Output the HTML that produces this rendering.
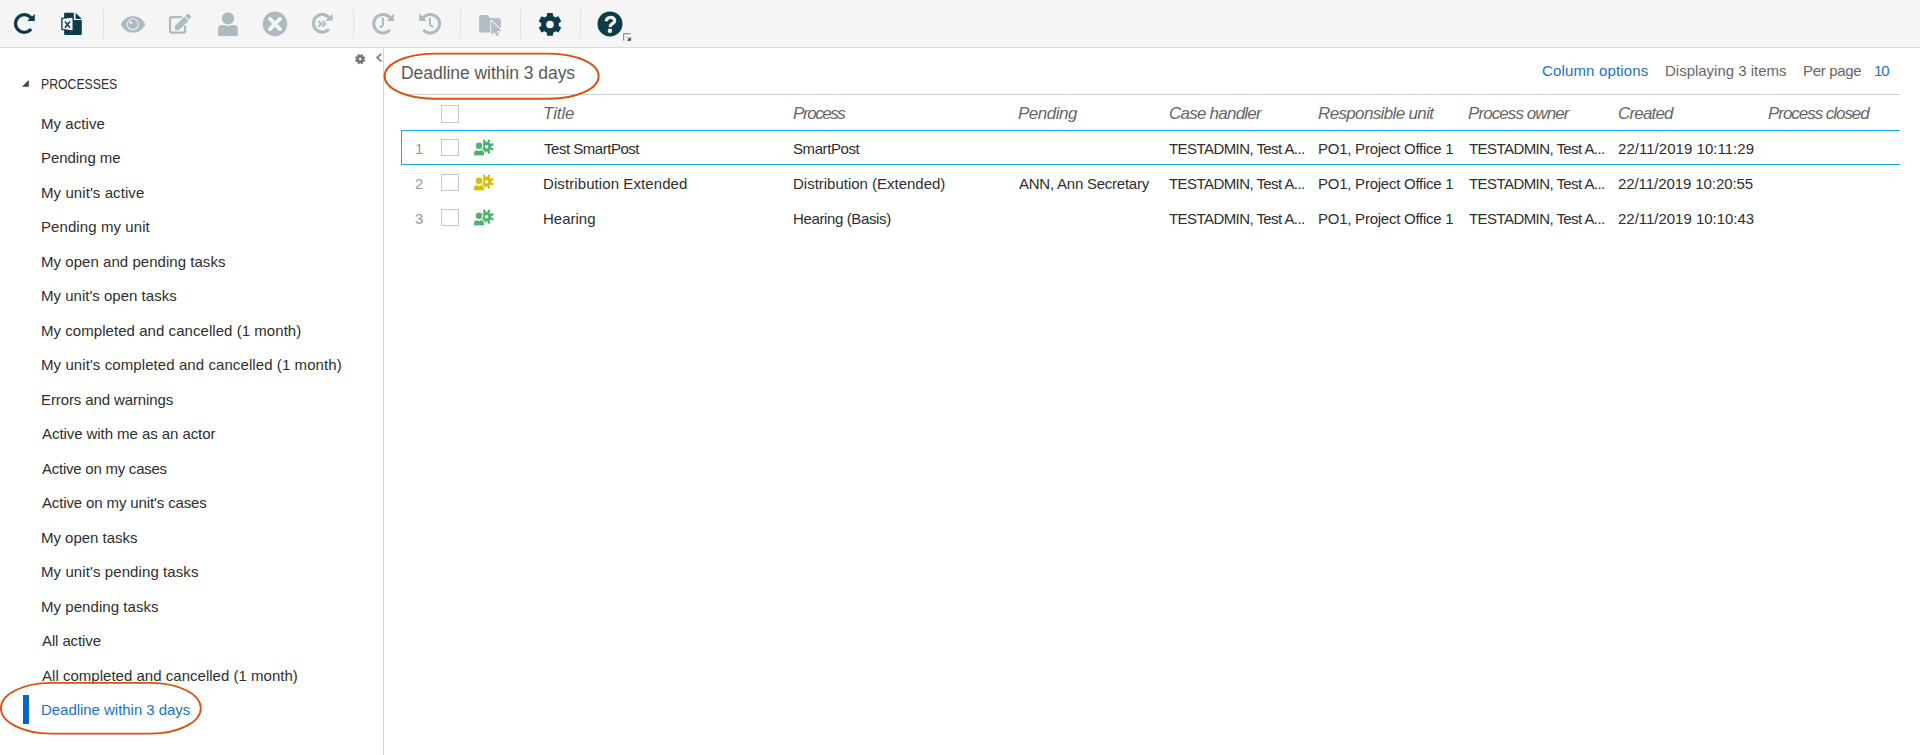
<!DOCTYPE html>
<html><head><meta charset="utf-8"><style>
*{margin:0;padding:0;box-sizing:border-box}
html,body{width:1920px;height:755px;overflow:hidden;background:#fff}
body{position:relative;font-family:"Liberation Sans",sans-serif}
.tb{position:absolute;left:0;top:0;width:1920px;height:47px;background:#f5f5f5}
.tbl{position:absolute;left:0;top:47px;width:1920px;height:1px;background:#dcdcdc}
.sep{position:absolute;top:9px;width:1px;height:29px;background:#e2e2e2}
.ic{position:absolute;overflow:visible}
.sbl{position:absolute;left:383px;top:48px;width:1px;height:707px;background:#d4d4d4}
.t{position:absolute;white-space:nowrap;line-height:normal}
.proc{font-size:15px;color:#2e2e2e;transform:scaleX(0.817);transform-origin:0 0}
.si{font-size:15px;color:#2e2e2e}
.act{color:#1a73c8}
.h1{font-size:17.5px;color:#595959}
.info{font-size:15px;color:#666}
.blue{color:#1a73c8}
.hd{font-size:17px;font-style:italic;color:#666}
.num{font-size:15px;color:#999}
.cell{font-size:15px;color:#2e2e2e}
.cb{position:absolute;width:18px;height:17px;border:1px solid #c8c8c8;background:#fff}
.hline{position:absolute;left:401px;top:94px;width:1499px;height:1px;background:#d0d0d0}
.sel{position:absolute;left:401px;top:130px;width:1499px;height:35px;border:1px solid #12a9e6;border-right:none}
.bar{position:absolute;left:23px;top:695px;width:6px;height:29px;background:#0066cc}
</style></head><body>
<div class="tb"></div><div class="tbl"></div>
<div class="sep" style="left:103px"></div><div class="sep" style="left:353px"></div><div class="sep" style="left:460px"></div><div class="sep" style="left:520px"></div><div class="sep" style="left:580px"></div>
<svg class="ic" style="left:10px;top:8px" width="30" height="30" viewBox="0 0 30 30"><path d="M20.22,22.08A8.85,8.85 0 1 1 20.88,9.58" fill="none" stroke="#0e3a4a" stroke-width="3.3" stroke-linecap="round"/><path d="M24.8,6V13.1H17.1Z" fill="#0e3a4a"/></svg><svg class="ic" style="left:56px;top:8px" width="30" height="30" viewBox="0 0 30 30"><path d="M8.1,5.8Q8.1,4.8 9.1,4.8H17.8V12H25.8V26Q25.8,27 24.8,27H9.1Q8.1,27 8.1,26Z" fill="#0e3a4a"/><path d="M19.6,4.8L25.8,10.9H19.6Z" fill="#0e3a4a"/><path d="M5.85,10.45L17.2,8.9V23.2L5.85,21.35Z" fill="#f5f5f5" stroke="#0e3a4a" stroke-width="1.3" stroke-linejoin="round"/><path d="M8.9,13.5L14,19.8M14,13.5L8.9,19.8" stroke="#0e3a4a" stroke-width="1.45"/></svg><svg class="ic" style="left:115px;top:8px" width="35" height="32" viewBox="0 0 35 32"><path d="M5.7,16.4C9,10.5 13,8.3 18,8.3C23,8.3 27,10.5 30.3,16.4C27,22.3 23,24.6 18,24.6C13,24.6 9,22.3 5.7,16.4Z" fill="#adbac0"/><circle cx="17.8" cy="16.3" r="6.0" fill="#f5f5f5"/><circle cx="17.8" cy="16.3" r="5.05" fill="#adbac0"/><circle cx="15.9" cy="14.5" r="1.35" fill="#f5f5f5"/></svg><svg class="ic" style="left:164px;top:8px" width="32" height="32" viewBox="0 0 32 32"><path d="M17.8,9.15H7.6Q6.05,9.15 6.05,10.7V23.1Q6.05,24.65 7.6,24.65H19.5Q21.05,24.65 21.05,23.1V17.8" fill="none" stroke="#adbac0" stroke-width="2.3"/><path d="M11.2,21.8V18L20.4,8.8L24.2,12.6L15,21.8Z" fill="#adbac0" stroke="#adbac0" stroke-width="0.6" stroke-linejoin="round"/><path d="M21.5,8.2L23.6,6.1Q24.2,5.5 24.8,6.1L27,8.3Q27.6,8.9 27,9.5L24.9,11.6Z" fill="#adbac0"/></svg><svg class="ic" style="left:212px;top:8px" width="32" height="32" viewBox="0 0 32 32"><circle cx="16" cy="10.4" r="6.1" fill="#adbac0"/><path d="M6.1,27V20.5Q6.1,17 9.8,17Q13,17 16,18.3Q19,17 22.1,17Q25.8,17 25.8,20.5V27Q25.8,28 24.8,28H7.1Q6.1,28 6.1,27Z" fill="#adbac0"/></svg><svg class="ic" style="left:258px;top:8px" width="34" height="32" viewBox="0 0 34 32"><circle cx="16.95" cy="15.9" r="12.3" fill="#adbac0"/><path d="M11.9,10.95L22,21.05M22,10.95L11.9,21.05" stroke="#f5f5f5" stroke-width="3.9" stroke-linecap="round"/></svg><svg class="ic" style="left:306px;top:8px" width="32" height="32" viewBox="0 0 32 32"><path d="M21.99,22.03A8.85,8.85 0 1 1 22.88,9.33" fill="none" stroke="#adbac0" stroke-width="3.1" stroke-linecap="round"/><path d="M26.7,6.1V12.7H19.3Z" fill="#adbac0"/><path d="M12.4,13.3L15.3,15.9L12.4,18.5M16.4,13.3L19.3,15.9L16.4,18.5" fill="none" stroke="#adbac0" stroke-width="1.9"/></svg><svg class="ic" style="left:366px;top:8px" width="32" height="32" viewBox="0 0 32 32"><path d="M22.98,22.82A9.3,9.3 0 1 1 23.91,9.48" fill="none" stroke="#adbac0" stroke-width="3.0" stroke-linecap="round"/><path d="M27.75,5.5V12.9H20.8Z" fill="#adbac0"/><path d="M16.95,10.6V16.9L14.4,19.2" fill="none" stroke="#adbac0" stroke-width="2" stroke-linecap="round" stroke-linejoin="round"/></svg><svg class="ic" style="left:414px;top:8px" width="32" height="32" viewBox="0 0 32 32"><path d="M10.32,22.82A9.3,9.3 0 1 0 9.39,9.48" fill="none" stroke="#adbac0" stroke-width="3.0" stroke-linecap="round"/><path d="M5.1,5.3V12.9H12.5Z" fill="#adbac0"/><path d="M15.9,10.8V17L18.4,18.6" fill="none" stroke="#adbac0" stroke-width="2" stroke-linecap="round" stroke-linejoin="round"/></svg><svg class="ic" style="left:474px;top:8px" width="32" height="32" viewBox="0 0 32 32"><path d="M5.1,8.5Q5.1,7 6.6,7H13.9L16.1,10.2H25.4Q26.9,10.2 26.9,11.7V23.1Q26.9,24.6 25.4,24.6H6.6Q5.1,24.6 5.1,23.1Z" fill="#b4bcc6"/><path d="M17.2,12.7V26.7L20.55,24.15L23.1,28.4L25,27.1L22.9,23.5L27.1,22.25Z" fill="#f5f5f5" stroke="#f5f5f5" stroke-width="2" stroke-linejoin="round"/><path d="M17.2,12.7V26.7L20.55,24.15L23.1,28.4L25,27.1L22.9,23.5L27.1,22.25Z" fill="#b4bcc6"/></svg><svg class="ic" style="left:534px;top:8px" width="32" height="32" viewBox="0 0 32 32"><path d="M12.78,8.26L13.23,5.08L18.77,5.08L19.22,8.26A8.8,8.8 0 0 1 21.48,9.56L21.48,9.56L24.46,8.36L27.23,13.17L24.70,15.15A8.8,8.8 0 0 1 24.70,17.75L24.70,17.75L27.23,19.73L24.46,24.54L21.48,23.34A8.8,8.8 0 0 1 19.22,24.64L19.22,24.64L18.77,27.82L13.23,27.82L12.78,24.64A8.8,8.8 0 0 1 10.52,23.34L10.52,23.34L7.54,24.54L4.77,19.73L7.30,17.75A8.8,8.8 0 0 1 7.30,15.15L7.30,15.15L4.77,13.17L7.54,8.36L10.52,9.56A8.8,8.8 0 0 1 12.78,8.26ZM19.80,16.45A3.8,3.8 0 1 0 12.20,16.45A3.8,3.8 0 1 0 19.80,16.45Z" fill="#0e3a4a" fill-rule="evenodd"/></svg><svg class="ic" style="left:592px;top:6px" width="44" height="38" viewBox="0 0 44 38"><circle cx="18" cy="17.9" r="12.5" fill="#0e3a4a"/><path d="M14.3,15.3C14.3,12.8 16.1,11.3 18.4,11.3C20.9,11.3 22.7,12.8 22.7,14.9C22.7,17.5 18.3,17.7 18.3,20.2V21.1" fill="none" stroke="#f5f5f5" stroke-width="3.3"/><circle cx="17.9" cy="24.7" r="2.25" fill="#f5f5f5"/><path d="M31.7,34.5V27.7H38.6" fill="none" stroke="#777" stroke-width="1"/><path d="M35.2,31L37.8,33.6M38.6,31.6V34.4H35.8Z" stroke="#555" stroke-width="1" fill="#555"/></svg>
<div class="sbl"></div>
<svg class="ic" style="left:350px;top:50px" width="36" height="18" viewBox="0 0 36 18"><path d="M7.61,6.18L7.33,4.76L9.16,4.00L9.97,5.21A3.9,3.9 0 0 1 10.43,5.21L10.43,5.21L11.24,4.00L13.07,4.76L12.79,6.18A3.9,3.9 0 0 1 13.12,6.51L13.12,6.51L14.54,6.23L15.30,8.06L14.09,8.87A3.9,3.9 0 0 1 14.09,9.33L14.09,9.33L15.30,10.14L14.54,11.97L13.12,11.69A3.9,3.9 0 0 1 12.79,12.02L12.79,12.02L13.07,13.44L11.24,14.20L10.43,12.99A3.9,3.9 0 0 1 9.97,12.99L9.97,12.99L9.16,14.20L7.33,13.44L7.61,12.02A3.9,3.9 0 0 1 7.28,11.69L7.28,11.69L5.86,11.97L5.10,10.14L6.31,9.33A3.9,3.9 0 0 1 6.31,8.87L6.31,8.87L5.10,8.06L5.86,6.23L7.28,6.51A3.9,3.9 0 0 1 7.61,6.18ZM11.45,9.10A1.25,1.25 0 1 0 8.95,9.10A1.25,1.25 0 1 0 11.45,9.10Z" fill="#777" fill-rule="evenodd"/><path d="M31.2,3.8L27.1,7.6L31.2,11.4" fill="none" stroke="#777" stroke-width="1.6"/></svg>
<svg class="ic" style="left:20px;top:78px" width="12" height="12" viewBox="0 0 12 12"><path d="M8.8,2L8.8,8.7L2,8.7Z" fill="#444"/></svg>
<div id="proc" class="t proc" style="left:41.00px;top:75.10px;letter-spacing:0.000px">PROCESSES</div><div id="si0" class="t si" style="left:41.00px;top:114.97px;letter-spacing:0.069px">My active</div><div id="si1" class="t si" style="left:41.00px;top:149.47px;letter-spacing:-0.048px">Pending me</div><div id="si2" class="t si" style="left:41.00px;top:183.97px;letter-spacing:0.082px">My unit&#39;s active</div><div id="si3" class="t si" style="left:41.00px;top:218.47px;letter-spacing:0.085px">Pending my unit</div><div id="si4" class="t si" style="left:41.00px;top:252.97px;letter-spacing:0.041px">My open and pending tasks</div><div id="si5" class="t si" style="left:41.00px;top:287.47px;letter-spacing:0.013px">My unit&#39;s open tasks</div><div id="si6" class="t si" style="left:41.00px;top:321.97px;letter-spacing:0.051px">My completed and cancelled (1 month)</div><div id="si7" class="t si" style="left:41.00px;top:356.47px;letter-spacing:0.083px">My unit&#39;s completed and cancelled (1 month)</div><div id="si8" class="t si" style="left:41.00px;top:390.97px;letter-spacing:-0.111px">Errors and warnings</div><div id="si9" class="t si" style="left:42.00px;top:425.47px;letter-spacing:-0.064px">Active with me as an actor</div><div id="si10" class="t si" style="left:42.00px;top:459.97px;letter-spacing:-0.243px">Active on my cases</div><div id="si11" class="t si" style="left:42.00px;top:494.47px;letter-spacing:-0.131px">Active on my unit&#39;s cases</div><div id="si12" class="t si" style="left:41.00px;top:528.97px;letter-spacing:-0.013px">My open tasks</div><div id="si13" class="t si" style="left:41.00px;top:563.47px;letter-spacing:0.091px">My unit&#39;s pending tasks</div><div id="si14" class="t si" style="left:41.00px;top:597.97px;letter-spacing:0.050px">My pending tasks</div><div id="si15" class="t si" style="left:42.00px;top:632.47px;letter-spacing:-0.111px">All active</div><div id="si16" class="t si" style="left:42.00px;top:666.97px;letter-spacing:0.020px">All completed and cancelled (1 month)</div><div id="siact" class="t si act" style="left:41.00px;top:700.60px;letter-spacing:-0.036px">Deadline within 3 days</div>
<div class="bar"></div>
<div class="hline"></div>
<div class="cb" style="left:441px;top:105px;height:18px"></div>
<div class="sel"></div>
<div id="h1" class="t h1" style="left:401.00px;top:62.75px;letter-spacing:-0.047px">Deadline within 3 days</div><div id="co" class="t info blue" style="left:1542.00px;top:62.00px;letter-spacing:0.154px">Column options</div><div id="disp" class="t info" style="left:1665.00px;top:62.00px;letter-spacing:-0.013px">Displaying 3 items</div><div id="pp" class="t info" style="left:1803.00px;top:62.00px;letter-spacing:-0.317px">Per page</div><div id="ten" class="t info blue" style="left:1874.00px;top:62.00px;letter-spacing:-1.200px">10</div><div id="hd0" class="t hd" style="left:543.00px;top:103.90px;letter-spacing:-0.100px">Title</div><div id="hd1" class="t hd" style="left:793.00px;top:103.90px;letter-spacing:-1.433px">Process</div><div id="hd2" class="t hd" style="left:1018.00px;top:103.90px;letter-spacing:-0.500px">Pending</div><div id="hd3" class="t hd" style="left:1169.00px;top:103.90px;letter-spacing:-0.763px">Case handler</div><div id="hd4" class="t hd" style="left:1318.00px;top:103.90px;letter-spacing:-0.647px">Responsible unit</div><div id="hd5" class="t hd" style="left:1468.00px;top:103.90px;letter-spacing:-0.921px">Process owner</div><div id="hd6" class="t hd" style="left:1618.00px;top:103.90px;letter-spacing:-0.833px">Created</div><div id="hd7" class="t hd" style="left:1768.00px;top:103.90px;letter-spacing:-1.042px">Process closed</div><div id="num0" class="t num" style="left:415.00px;top:140.00px;letter-spacing:0.000px">1</div><div class="cb" style="left:441px;top:139px"></div><svg class="ic" style="left:470px;top:136px" width="30" height="24" viewBox="0 0 30 24"><path d="M13.72,7.11L12.79,4.36L14.81,3.52L16.09,6.13A4.6,4.6 0 0 1 17.11,6.13L17.11,6.13L18.39,3.52L20.41,4.36L19.48,7.11A4.6,4.6 0 0 1 20.19,7.82L20.19,7.82L22.94,6.89L23.78,8.91L21.17,10.19A4.6,4.6 0 0 1 21.17,11.21L21.17,11.21L23.78,12.49L22.94,14.51L20.19,13.58A4.6,4.6 0 0 1 19.48,14.29L19.48,14.29L20.41,17.04L18.39,17.88L17.11,15.27A4.6,4.6 0 0 1 16.09,15.27L16.09,15.27L14.81,17.88L12.79,17.04L13.72,14.29A4.6,4.6 0 0 1 13.01,13.58L13.01,13.58L10.26,14.51L9.42,12.49L12.03,11.21A4.6,4.6 0 0 1 12.03,10.19L12.03,10.19L9.42,8.91L10.26,6.89L13.01,7.82A4.6,4.6 0 0 1 13.72,7.11ZM18.30,10.70A1.7,1.7 0 1 0 14.90,10.70A1.7,1.7 0 1 0 18.30,10.70Z" fill="#4db270" fill-rule="evenodd"/><circle cx="9.05" cy="9.85" r="3.8" fill="#4db270" stroke="#fff" stroke-width="1.1"/><path d="M3.6,19.9V17Q3.6,13.8 6.6,13.8Q7.9,13.8 9.05,14.9Q10.2,13.8 11.5,13.8Q14.5,13.8 14.5,17V19.9Z" fill="#4db270" stroke="#fff" stroke-width="1"/></svg><div id="c0_0" class="t cell" style="left:544.00px;top:140.00px;letter-spacing:-0.480px">Test SmartPost</div><div id="c0_1" class="t cell" style="left:793.00px;top:140.00px;letter-spacing:-0.425px">SmartPost</div><div id="c0_3" class="t cell" style="left:1169.00px;top:140.00px;letter-spacing:-0.567px">TESTADMIN, Test A...</div><div id="c0_4" class="t cell" style="left:1318.00px;top:140.00px;letter-spacing:-0.246px">PO1, Project Office 1</div><div id="c0_5" class="t cell" style="left:1469.00px;top:140.00px;letter-spacing:-0.567px">TESTADMIN, Test A...</div><div id="c0_6" class="t cell" style="left:1618.00px;top:140.00px;letter-spacing:0.035px">22/11/2019 10:11:29</div><div id="num1" class="t num" style="left:415.00px;top:174.90px;letter-spacing:0.000px">2</div><div class="cb" style="left:441px;top:174px"></div><svg class="ic" style="left:470px;top:171px" width="30" height="24" viewBox="0 0 30 24"><path d="M13.72,7.11L12.79,4.36L14.81,3.52L16.09,6.13A4.6,4.6 0 0 1 17.11,6.13L17.11,6.13L18.39,3.52L20.41,4.36L19.48,7.11A4.6,4.6 0 0 1 20.19,7.82L20.19,7.82L22.94,6.89L23.78,8.91L21.17,10.19A4.6,4.6 0 0 1 21.17,11.21L21.17,11.21L23.78,12.49L22.94,14.51L20.19,13.58A4.6,4.6 0 0 1 19.48,14.29L19.48,14.29L20.41,17.04L18.39,17.88L17.11,15.27A4.6,4.6 0 0 1 16.09,15.27L16.09,15.27L14.81,17.88L12.79,17.04L13.72,14.29A4.6,4.6 0 0 1 13.01,13.58L13.01,13.58L10.26,14.51L9.42,12.49L12.03,11.21A4.6,4.6 0 0 1 12.03,10.19L12.03,10.19L9.42,8.91L10.26,6.89L13.01,7.82A4.6,4.6 0 0 1 13.72,7.11ZM18.30,10.70A1.7,1.7 0 1 0 14.90,10.70A1.7,1.7 0 1 0 18.30,10.70Z" fill="#dcbe00" fill-rule="evenodd"/><circle cx="9.05" cy="9.85" r="3.8" fill="#dcbe00" stroke="#fff" stroke-width="1.1"/><path d="M3.6,19.9V17Q3.6,13.8 6.6,13.8Q7.9,13.8 9.05,14.9Q10.2,13.8 11.5,13.8Q14.5,13.8 14.5,17V19.9Z" fill="#dcbe00" stroke="#fff" stroke-width="1"/></svg><div id="c1_0" class="t cell" style="left:543.00px;top:174.90px;letter-spacing:0.090px">Distribution Extended</div><div id="c1_1" class="t cell" style="left:793.00px;top:174.90px;letter-spacing:-0.013px">Distribution (Extended)</div><div id="c1_2" class="t cell" style="left:1019.00px;top:174.90px;letter-spacing:-0.235px">ANN, Ann Secretary</div><div id="c1_3" class="t cell" style="left:1169.00px;top:174.90px;letter-spacing:-0.567px">TESTADMIN, Test A...</div><div id="c1_4" class="t cell" style="left:1318.00px;top:174.90px;letter-spacing:-0.246px">PO1, Project Office 1</div><div id="c1_5" class="t cell" style="left:1469.00px;top:174.90px;letter-spacing:-0.567px">TESTADMIN, Test A...</div><div id="c1_6" class="t cell" style="left:1618.00px;top:174.90px;letter-spacing:-0.077px">22/11/2019 10:20:55</div><div id="num2" class="t num" style="left:415.00px;top:209.80px;letter-spacing:0.000px">3</div><div class="cb" style="left:441px;top:209px"></div><svg class="ic" style="left:470px;top:206px" width="30" height="24" viewBox="0 0 30 24"><path d="M13.72,7.11L12.79,4.36L14.81,3.52L16.09,6.13A4.6,4.6 0 0 1 17.11,6.13L17.11,6.13L18.39,3.52L20.41,4.36L19.48,7.11A4.6,4.6 0 0 1 20.19,7.82L20.19,7.82L22.94,6.89L23.78,8.91L21.17,10.19A4.6,4.6 0 0 1 21.17,11.21L21.17,11.21L23.78,12.49L22.94,14.51L20.19,13.58A4.6,4.6 0 0 1 19.48,14.29L19.48,14.29L20.41,17.04L18.39,17.88L17.11,15.27A4.6,4.6 0 0 1 16.09,15.27L16.09,15.27L14.81,17.88L12.79,17.04L13.72,14.29A4.6,4.6 0 0 1 13.01,13.58L13.01,13.58L10.26,14.51L9.42,12.49L12.03,11.21A4.6,4.6 0 0 1 12.03,10.19L12.03,10.19L9.42,8.91L10.26,6.89L13.01,7.82A4.6,4.6 0 0 1 13.72,7.11ZM18.30,10.70A1.7,1.7 0 1 0 14.90,10.70A1.7,1.7 0 1 0 18.30,10.70Z" fill="#4db270" fill-rule="evenodd"/><circle cx="9.05" cy="9.85" r="3.8" fill="#4db270" stroke="#fff" stroke-width="1.1"/><path d="M3.6,19.9V17Q3.6,13.8 6.6,13.8Q7.9,13.8 9.05,14.9Q10.2,13.8 11.5,13.8Q14.5,13.8 14.5,17V19.9Z" fill="#4db270" stroke="#fff" stroke-width="1"/></svg><div id="c2_0" class="t cell" style="left:543.00px;top:209.80px;letter-spacing:0.000px">Hearing</div><div id="c2_1" class="t cell" style="left:793.00px;top:209.80px;letter-spacing:-0.370px">Hearing (Basis)</div><div id="c2_3" class="t cell" style="left:1169.00px;top:209.80px;letter-spacing:-0.567px">TESTADMIN, Test A...</div><div id="c2_4" class="t cell" style="left:1318.00px;top:209.80px;letter-spacing:-0.246px">PO1, Project Office 1</div><div id="c2_5" class="t cell" style="left:1469.00px;top:209.80px;letter-spacing:-0.567px">TESTADMIN, Test A...</div><div id="c2_6" class="t cell" style="left:1618.00px;top:209.80px;letter-spacing:-0.020px">22/11/2019 10:10:43</div>
<svg class="ic" style="left:0;top:0" width="1920" height="755" viewBox="0 0 1920 755">
<rect x="384.6" y="53.6" width="214.1" height="45.2" rx="49.5" ry="22.6" fill="none" stroke="#d9500f" stroke-width="1.9"/>
<rect x="0.9" y="682.8" width="199.9" height="50.8" rx="50" ry="25.4" fill="none" stroke="#d9500f" stroke-width="1.8"/>
</svg>
</body></html>
